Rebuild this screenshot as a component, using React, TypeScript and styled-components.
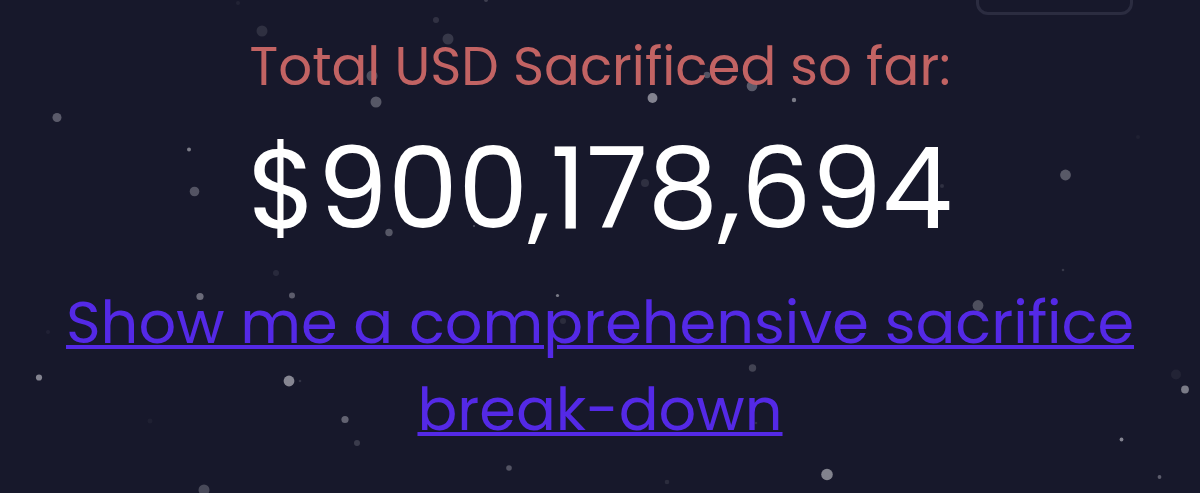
import React from "react";
import styled, { createGlobalStyle } from "styled-components";

const GlobalStyle = createGlobalStyle`
  * { box-sizing: border-box; }
  body {
    margin: 0;
    background: #17182b;
    font-family: Poppins, Inter, sans-serif;
  }
`;

const Page = styled.div`
  position: relative;
  min-height: 100vh;
  overflow: hidden;
  background: #17182b;
`;

const Particles = styled.svg`
  position: absolute;
  inset: 0;
  width: 100%;
  height: 100%;
  pointer-events: none;
`;

const TopBar = styled.header`
  position: relative;
  display: flex;
  justify-content: flex-end;
  align-items: flex-end;
  height: 15px;
  padding: 0 67px;
  overflow: hidden;
`;

const OutlineButton = styled.button`
  flex: none;
  width: 157px;
  height: 64px;
  border: 3px solid #2b2c40;
  border-radius: 12px;
  background: transparent;
`;

const Summary = styled.main`
  position: relative;
  display: flex;
  flex-direction: column;
  align-items: center;
  padding: 12px 60px 16px;
  text-align: center;
`;

const Title = styled.h1`
  margin: 0;
  color: #c26363;
  font-size: 53px;
  font-weight: 400;
  line-height: 80px;
`;

const Amount = styled.p`
  margin: 0;
  color: #ffffff;
  font-size: 112px;
  font-weight: 400;
  line-height: 164px;
`;

const BreakdownLink = styled.a`
  margin-top: 8px;
  color: #5429e6;
  font-size: 59px;
  line-height: 87px;
  text-decoration: underline;
  text-decoration-thickness: 4px;
  text-underline-offset: 2px;
`;

/* x, y, radius, opacity */
const dots: number[][] = [
  [262, 31, 5.5, 0.12], [238, 3, 2, 0.06], [372, 76, 5.5, 0.28], [376, 102, 5.5, 0.32],
  [57, 117.5, 4.5, 0.34], [189, 149.5, 2, 0.5], [194.5, 191.5, 4.8, 0.3], [389, 232.5, 3.7, 0.32],
  [436, 20, 3, 0.13], [448, 39, 5.5, 0.16], [486, 0, 2, 0.2], [652.5, 98, 4.9, 0.55],
  [707, 75, 3.3, 0.3], [752, 86, 5.3, 0.34], [794, 100, 2.2, 0.5], [645, 183, 4, 0.12],
  [474, 226, 1, 0.3], [942, 186, 2, 0.12], [1065.5, 175, 5.4, 0.33], [1138, 137, 2, 0.04],
  [276, 273, 3, 0.09], [200, 296.5, 3.6, 0.42], [292, 295.5, 3, 0.35], [48, 332, 2, 0.05],
  [39, 377.5, 3.1, 0.55], [289, 381, 5.4, 0.56], [300, 381, 1.3, 0.14], [150, 421, 2.5, 0.04],
  [345, 419.5, 3.6, 0.38], [357, 443, 3, 0.18], [204, 490, 5.5, 0.25], [557.5, 295.5, 1.6, 0.5],
  [563, 321, 3, 0.1], [752.5, 368, 3.7, 0.22], [509, 468, 2.8, 0.3], [667, 482, 2.3, 0.1],
  [756, 423, 1.3, 0.12], [1063, 270, 1.3, 0.16], [978, 305.5, 5.4, 0.28], [1176, 374.5, 5, 0.06],
  [1185, 389.5, 3.9, 0.5], [1121.5, 439.5, 1.9, 0.55], [1159.5, 477, 1.9, 0.35], [827, 474.5, 5.8, 0.54],
];

export default function App() {
  return (
    <>
      <GlobalStyle />
      <Page>
        <Particles viewBox="0 0 1200 493" preserveAspectRatio="xMidYMin slice" aria-hidden="true">
          {dots.map(([x, y, r, opacity]) => (
            <circle key={`${x}-${y}`} cx={x} cy={y} r={r} fill="#dddde4" fillOpacity={opacity} />
          ))}
        </Particles>
        <TopBar>
          <OutlineButton type="button" />
        </TopBar>
        <Summary>
          <Title>Total USD Sacrificed so far:</Title>
          <Amount>$900,178,694</Amount>
          <BreakdownLink href="#breakdown">
            Show me a comprehensive sacrifice break-down
          </BreakdownLink>
        </Summary>
      </Page>
    </>
  );
}
